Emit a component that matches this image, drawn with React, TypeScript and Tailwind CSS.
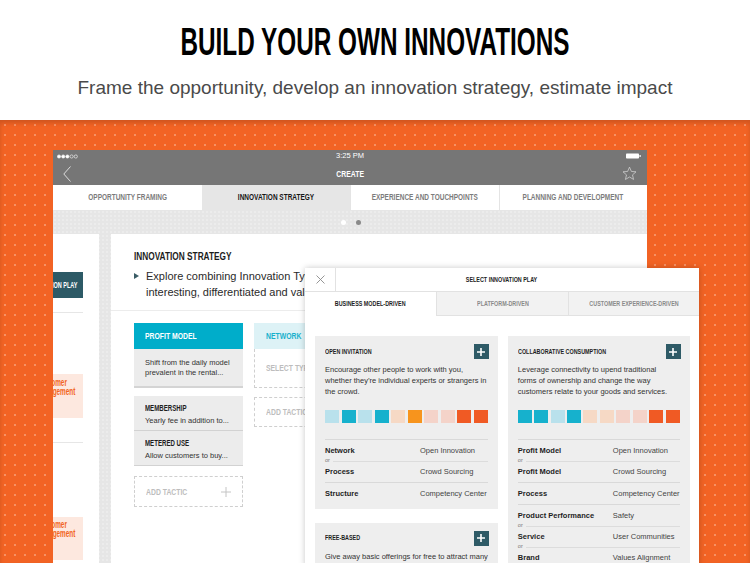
import React from 'react';

const SANS = "font-['Liberation_Sans',Arial,sans-serif]";

const TABS = ['Opportunity Framing', 'Innovation Strategy', 'Experience and Touchpoints', 'Planning and Development'];
const PLAY_TABS = ['Business Model-Driven', 'Platform-Driven', 'Customer Experience-Driven'];

const LC = '#b9e1ec';
const CY = '#16b1cd';
const PE = '#f6d9c5';
const OR = '#f7941d';
const PK = '#f4d3c9';
const RD = '#f05a24';

type Group = { label: string; value: string }[];

const PLAYS: { title: string; lines: string[]; swatches: string[]; groups: Group[] }[][] = [
  [
    {
      title: 'Open Invitation',
      lines: ['Encourage other people to work with you,', 'whether they\u2019re individual experts or strangers in', 'the crowd.'],
      swatches: [LC, CY, LC, CY, PE, OR, PK, PK, RD, RD],
      groups: [
        [
          { label: 'Network', value: 'Open Innovation' },
          { label: 'Process', value: 'Crowd Sourcing' },
        ],
        [{ label: 'Structure', value: 'Competency Center' }],
      ],
    },
    {
      title: 'Free-Based',
      lines: ['Give away basic offerings for free to attract many', 'users and then make money off of them in'],
      swatches: [],
      groups: [],
    },
  ],
  [
    {
      title: 'Collaborative Consumption',
      lines: ['Leverage connectivity to upend traditional', 'forms of ownership and change the way', 'customers relate to your goods and services.'],
      swatches: [CY, CY, LC, CY, PE, PE, PK, PK, RD, RD],
      groups: [
        [
          { label: 'Profit Model', value: 'Open Innovation' },
          { label: 'Profit Model', value: 'Crowd Sourcing' },
        ],
        [{ label: 'Process', value: 'Competency Center' }],
        [
          { label: 'Product Performance', value: 'Safety' },
          { label: 'Service', value: 'User Communities' },
          { label: 'Brand', value: 'Values Alignment' },
        ],
      ],
    },
  ],
];

// condensed bold label: no condensed face is installed, so squeeze Liberation Sans Bold
function Cond({
  children,
  className = '',
  origin = 'origin-left',
  sq = 'scale-x-[0.72]',
}: {
  children: React.ReactNode;
  className?: string;
  origin?: string;
  sq?: string;
}) {
  return (
    <span className={`${SANS} inline-block font-bold whitespace-nowrap ${sq} ${origin} ${className}`}>
      {children}
    </span>
  );
}

function Plus({ color = '#fff', size = 7, width = 1.5 }: { color?: string; size?: number; width?: number }) {
  return (
    <svg width={size} height={size} viewBox="0 0 10 10">
      <path d="M5 0V10M0 5H10" stroke={color} strokeWidth={width * (10 / size)} />
    </svg>
  );
}

function StatusBar() {
  return (
    <div className="h-[35px] shrink-0 bg-[#767676] flex flex-col text-white">
      <div className="h-[12px] grid grid-cols-[1fr_auto_1fr] items-center px-[4px]">
        <svg width="22" height="5" viewBox="0 0 22 5">
          {[0, 1, 2, 3, 4].map((i) => (
            <circle key={i} cx={2 + i * 4.2} cy={2.5} r={1.6} fill={i < 3 ? '#fff' : 'none'} stroke="#fff" strokeWidth={0.6} />
          ))}
        </svg>
        <span className={`${SANS} text-[7.5px] leading-none`}>3:25 PM</span>
        <svg className="justify-self-end mr-[2px]" width="15" height="6" viewBox="0 0 15 6">
          <rect x="0" y="0.5" width="13" height="5" rx="0.8" fill="#fff" />
          <rect x="13.5" y="2" width="1.2" height="2" fill="#fff" />
        </svg>
      </div>
      <div className="flex-1 grid grid-cols-[1fr_auto_1fr] items-center px-[10px]">
        <svg width="8" height="16" viewBox="0 0 8 16">
          <path d="M7.5 0.5L0.8 8L7.5 15.5" fill="none" stroke="#e8e8e8" strokeWidth="0.9" />
        </svg>
        <Cond origin="origin-center" className="text-[9.5px] leading-none">
          CREATE
        </Cond>
        <svg className="justify-self-end" width="15" height="15" viewBox="0 0 24 24">
          <path
            d="M12 1.8l3 6.9 7.4.6-5.6 4.9 1.7 7.3L12 17.6l-6.5 3.9 1.7-7.3L1.6 9.3l7.4-.6z"
            fill="none"
            stroke="#dcdcdc"
            strokeWidth="1.1"
            strokeLinejoin="round"
          />
        </svg>
      </div>
    </div>
  );
}

function LeftPeek() {
  return (
    <div className="w-[46px] shrink-0 bg-white overflow-hidden">
      <div className="-ml-[30px] w-[60px] flex flex-col">
        <div className="mt-[38px] h-[26px] bg-[#2d5a66] flex justify-end items-center overflow-hidden pr-[6px] text-white">
          <Cond origin="origin-right" sq="scale-x-[0.58]" className="text-[9.5px] leading-none">
            SELECT INNOVATION PLAY
          </Cond>
        </div>
        <div className="mt-[14px] h-px bg-[#e6e6e6]" />
        <div className="mt-[61px] h-[44px] bg-[#fde8df] pl-[14px] pt-[3px] text-[#f26522]">
          <Cond sq="scale-x-[0.64]" className="text-[10px] leading-[9.5px]">
            Customer
            <br />
            Engagement
          </Cond>
        </div>
        <div className="mt-[24px] h-px bg-[#e6e6e6]" />
        <div className="mt-[74px] h-[43px] bg-[#fde8df] pl-[14px] pt-[2px] text-[#f26522]">
          <Cond sq="scale-x-[0.64]" className="text-[10px] leading-[9.5px]">
            Customer
            <br />
            Engagement
          </Cond>
        </div>
      </div>
    </div>
  );
}

function TacticCard({ title, text }: { title: string; text: string }) {
  return (
    <div className="h-[35px] bg-[#ececec] border-b border-[#d2d2d2] px-[11px] pt-[7px]">
      <div className="h-[10px] flex items-center text-[#1e1e1e]">
        <Cond className="text-[8.5px] leading-none">{title}</Cond>
      </div>
      <div className={`${SANS} mt-[3px] text-[7.5px] leading-[10px] text-[#333]`}>{text}</div>
    </div>
  );
}

function AddTactic({ plus = true, h = 'h-[31px]' }: { plus?: boolean; h?: string }) {
  return (
    <div className={`${h} border border-dashed border-[#cfcfcf] flex items-center justify-between pl-[11px] pr-[11px] text-[#bdbdbd]`}>
      <Cond className="text-[9.5px] leading-none">ADD TACTIC</Cond>
      {plus && <Plus color="#c4c4c4" size={10} width={1} />}
    </div>
  );
}

function MainPanel() {
  return (
    <div className="flex-1 bg-white overflow-hidden flex flex-col">
      <div className="pl-[23px] pt-[16px] pb-[10px] border-b border-[#ececec]">
        <div className="h-[13px] flex items-center text-[#1c1c1c]">
          <Cond className="text-[11.5px] leading-none">INNOVATION STRATEGY</Cond>
        </div>
        <div className="mt-[5px] flex">
          <svg className="mt-[5px] shrink-0" width="5" height="6" viewBox="0 0 5 6">
            <path d="M0 0L5 3L0 6z" fill="#3b5d66" />
          </svg>
          <div className={`${SANS} ml-[7px] text-[11px] leading-[16px] text-[#2a2a2a] whitespace-nowrap`}>
            Explore combining Innovation Types to create something
            <br />
            interesting, differentiated and valuable for your customers.
          </div>
        </div>
      </div>
      <div className="pl-[23px] pt-[12px] flex gap-[11px]">
        <div className="w-[109px] flex flex-col">
          <div className="h-[26px] bg-[#00adca] flex items-center pl-[11px] text-white">
            <Cond className="text-[9.5px] leading-none">PROFIT MODEL</Cond>
          </div>
          <div className={`${SANS} h-[39px] bg-[#ececec] border-b-2 border-[#d4d4d4] px-[11px] pt-[9px] text-[7.5px] leading-[10px] text-[#333]`}>
            Shift from the daily model
            <br />
            prevalent in the rental...
          </div>
          <div className="mt-[8px]">
            <TacticCard title="MEMBERSHIP" text="Yearly fee in addition to..." />
            <TacticCard title="METERED USE" text="Allow customers to buy..." />
          </div>
          <div className="mt-[10px]">
            <AddTactic />
          </div>
        </div>
        <div className="w-[109px] flex flex-col">
          <div className="h-[26px] bg-[#ddf2f6] flex items-center pl-[12px] text-[#19b0cc]">
            <Cond className="text-[9.5px] leading-none">NETWORK</Cond>
          </div>
          <div className="h-[39px] border border-t-0 border-dashed border-[#cfcfcf] flex items-center pl-[11px] text-[#bdbdbd]">
            <Cond className="text-[9.5px] leading-none">SELECT TYPE</Cond>
          </div>
          <div className="mt-[9px]">
            <AddTactic plus={false} h="h-[30px]" />
          </div>
        </div>
      </div>
    </div>
  );
}

function Device() {
  return (
    <div className="w-[594px] h-[420px] flex flex-col">
      <StatusBar />
      <div className="h-[25px] shrink-0 grid grid-cols-4 bg-white">
        {TABS.map((t, i) => (
          <div
            key={t}
            className={`flex items-center justify-center uppercase ${
              i === 1
                ? 'bg-[#e6e6e6] text-[#161616]'
                : 'text-[#7c7c7c]' + (i > 1 ? ' border-l border-[#e4e4e4]' : '')
            }`}
          >
            <Cond origin="origin-center" className="text-[9px] leading-none">
              {t}
            </Cond>
          </div>
        ))}
      </div>
      <div className="flex-1 bg-[#e6e6e6] bg-[radial-gradient(rgba(255,255,255,0.55)_0.6px,transparent_0.8px)] bg-[length:4px_4px] flex flex-col">
        <div className="h-[24px] shrink-0 flex items-center justify-center gap-[10px] pl-[2px]">
          <span className="w-[5px] h-[5px] rounded-full bg-white" />
          <span className="w-[5px] h-[5px] rounded-full bg-[#8a8a8a]" />
        </div>
        <div className="flex-1 flex gap-[12px]">
          <LeftPeek />
          <MainPanel />
        </div>
      </div>
    </div>
  );
}

function PlayCard({ play }: { play: (typeof PLAYS)[number][number] }) {
  return (
    <div className="bg-[#eeeeee] px-[10px] pt-[8px] pb-[5px]">
      <div className="h-[15px] flex items-center justify-between">
        <Cond className="uppercase text-[7.5px] leading-none text-[#1e1e1e]">{play.title}</Cond>
        <span className="w-[15px] h-[15px] bg-[#2e5a66] flex items-center justify-center mr-[-1px]">
          <Plus size={8} width={1.6} />
        </span>
      </div>
      <div className={`${SANS} mt-[5px] text-[7.5px] leading-[11px] text-[#333] whitespace-nowrap`}>
        {play.lines.map((l) => (
          <div key={l}>{l}</div>
        ))}
      </div>
      {play.swatches.length > 0 && (
        <div className="mt-[12.5px] flex justify-between">
          {play.swatches.map((c, i) => (
            <span key={i} className="w-[14px] h-[13px]" style={{ backgroundColor: c }} />
          ))}
        </div>
      )}
      {play.groups.length > 0 && (
        <div className={`${SANS} mt-[16px] text-[7.5px] leading-[10px] whitespace-nowrap`}>
          {play.groups.map((g, gi) => (
            <div key={gi} className="border-t border-[#d9d9d9] pt-[6px] pb-[5px]">
              {g.map((r, ri) => (
                <React.Fragment key={ri}>
                  {ri > 0 && (
                    <div className="h-[11px] flex items-center gap-[3px]">
                      <span className="text-[5.5px] leading-none text-[#777]">or</span>
                      <span className="flex-1 h-px bg-[#dcdcdc]" />
                    </div>
                  )}
                  <div className="grid grid-cols-[95px_1fr]">
                    <span className="font-bold text-[#1e1e1e]">{r.label}</span>
                    <span className="text-[#444]">{r.value}</span>
                  </div>
                </React.Fragment>
              ))}
            </div>
          ))}
        </div>
      )}
    </div>
  );
}

function PlayModal() {
  return (
    <div className="absolute left-[305px] top-[148px] w-[394px] h-[300px] bg-white shadow-[0_0_6px_rgba(0,0,0,0.22)] flex flex-col">
      <div className="h-[24px] shrink-0 grid grid-cols-[31px_1fr_31px] border-b border-[#e2e2e2]">
        <div className="border-r border-[#e2e2e2] flex items-center justify-center">
          <svg width="9" height="9" viewBox="0 0 9 9">
            <path d="M0.5 0.5L8.5 8.5M8.5 0.5L0.5 8.5" stroke="#8a8a8a" strokeWidth="0.9" />
          </svg>
        </div>
        <div className="flex items-center justify-center text-[#222]">
          <Cond origin="origin-center" className="text-[7.5px] leading-none">
            SELECT INNOVATION PLAY
          </Cond>
        </div>
        <div />
      </div>
      <div className="h-[24px] shrink-0 grid grid-cols-3">
        {PLAY_TABS.map((t, i) => (
          <div
            key={t}
            className={`flex items-center justify-center uppercase ${
              i === 0 ? 'bg-white text-[#1e1e1e]' : 'bg-[#f2f2f2] text-[#8a8a8a] border-l border-b border-[#e2e2e2]'
            }`}
          >
            <Cond origin="origin-center" className="text-[7.5px] leading-none">
              {t}
            </Cond>
          </div>
        ))}
      </div>
      <div className="flex-1 overflow-hidden px-[10px] pt-[20px] flex gap-[10px]">
        {PLAYS.map((col, ci) => (
          <div key={ci} className="flex-1 flex flex-col gap-[14px]">
            {col.map((p) => (
              <PlayCard key={p.title} play={p} />
            ))}
          </div>
        ))}
      </div>
    </div>
  );
}

export default function App() {
  return (
    <div className="w-[750px] h-[563px] overflow-hidden bg-white flex flex-col">
      <header className="h-[120px] shrink-0 flex flex-col items-center">
        <h1 className={`${SANS} mt-[22px] text-[38px] leading-[40px] font-bold text-black whitespace-nowrap scale-x-[0.64]`}>
          BUILD YOUR OWN INNOVATIONS
        </h1>
        <p className={`${SANS} mt-[14px] text-[19px] leading-[24px] text-[#4a4a4a] whitespace-nowrap`}>
          Frame the opportunity, develop an innovation strategy, estimate impact
        </p>
      </header>
      <section className="relative flex-1 overflow-hidden bg-[#f26324] bg-[radial-gradient(rgba(255,255,255,0.3)_0.7px,transparent_1px)] bg-[length:10px_10px] pt-[30px] pl-[53px] shadow-[inset_0_3px_4px_rgba(0,0,0,0.15)]">
        <Device />
        <PlayModal />
      </section>
    </div>
  );
}
